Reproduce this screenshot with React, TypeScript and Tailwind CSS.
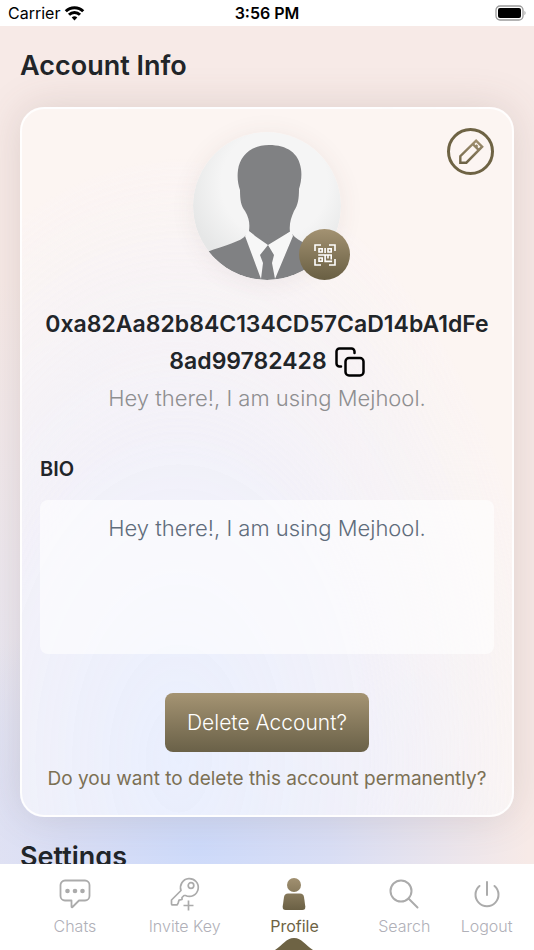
import type { ReactNode } from 'react';

export default function App() {
  return (
    <div className="h-screen w-full flex flex-col overflow-hidden bg-white font-['Inter',sans-serif] text-[#212529]">
      <StatusBar />
      <main
        className="flex-1 min-h-0 overflow-hidden px-5 pt-5 bg-[radial-gradient(ellipse_62%_30%_at_37%_98%,#cddafa_0%,#d9def5_40%,transparent_100%),radial-gradient(ellipse_50%_55%_at_0%_85%,#e8e7f3_0%,transparent_100%)] bg-[#f7eae7]"
      >
        <h1 className="text-[27px] leading-10 font-semibold">Account Info</h1>
        <AccountCard />
        <h1 className="mt-5 text-[27px] leading-10 font-semibold">Settings</h1>
      </main>
      <BottomNav />
    </div>
  )
}

function StatusBar() {
  return (
    <header className="relative z-10 h-[26px] shrink-0 grid grid-cols-3 items-center bg-white px-2 text-base text-black">
      <div className="flex items-center gap-1">
        <span>Carrier</span>
        <svg width="21" height="16" viewBox="0 0 21 16" fill="none" stroke="#000" strokeWidth="3">
          <path d="M1.8 6.3a12.3 12.3 0 0 1 17.4 0" />
          <path d="M5 9.8a7.8 7.8 0 0 1 11 0" />
          <path d="M10.500 15.500 7.700 12.600a4 4 0 0 1 5.600 0z" fill="#000" stroke="none" />
        </svg>
      </div>
      <div className="text-center font-semibold">3:56 PM</div>
      <svg className="justify-self-end" width="31" height="16" viewBox="0 0 31 16">
        <rect x="1" y="1" width="27" height="14" rx="4" fill="none" stroke="#9b9b9b" strokeWidth="1.300" />
        <rect x="3" y="3" width="23" height="10" rx="2" fill="#000" />
        <path d="M29.500 5.800q2 2.200 0 4.500z" fill="#9b9b9b" />
      </svg>
    </header>
  )
}

function AccountCard() {
  return (
    <section className="relative mt-[21px] rounded-3xl border-2 border-white/90 px-[18px] pt-[23px] pb-5 flex flex-col items-center text-center bg-[radial-gradient(ellipse_75%_85%_at_32%_92%,rgba(232,238,254,0.95)_0%,rgba(240,240,250,0.85)_50%,transparent_100%)] bg-[#fdf8f5]/80 shadow-[0_0_40px_rgba(100,80,70,0.17)]">
      <button
        aria-label="Edit profile"
        className="absolute top-[19px] right-[18px] size-[47px] rounded-full border-[3px] border-[#6e6344] flex items-center justify-center"
      >
        <PencilIcon />
      </button>

      <div className="relative size-[148px]">
        <Avatar />
        <button
          aria-label="Show QR code"
          className="absolute -right-[9px] bottom-0 size-[51px] rounded-full flex items-center justify-center bg-linear-to-b from-[#a39272] to-[#695f43]"
        >
          <QrIcon />
        </button>
      </div>

      <h2 className="mt-[26px] text-[23px] leading-[37px] font-semibold">
        0xa82Aa82b84C134CD57CaD14bA1dFe
        <span className="flex items-center justify-center gap-2">
          8ad99782428
          <button aria-label="Copy address"><CopyIcon /></button>
        </span>
      </h2>
      <p className="text-[22px] leading-9 font-light text-[#8e8e90]">Hey there!, I am using Mejhool.</p>

      <label htmlFor="bio" className="mt-[37px] self-start text-xl leading-8 font-semibold">BIO</label>
      <textarea
        id="bio"
        readOnly
        className="mt-[15px] h-[154px] w-full shrink-0 resize-none rounded-lg bg-white/60 py-3 text-center text-[22px] leading-8 font-light text-[#5f6c7b] outline-none"
        defaultValue="Hey there!, I am using Mejhool."
      />

      <button className="mt-[39px] h-[59px] rounded-lg px-[22px] text-[21px] font-light text-white bg-linear-to-b from-[#a59473] to-[#6a6148]">
        Delete Account?
      </button>
      <p className="mt-[11px] text-[19px] leading-8 text-[#7c7054] whitespace-nowrap">
        Do you want to delete this account permanently?
      </p>
    </section>
  )
}

function Avatar() {
  return (
    <svg className="size-full rounded-full shadow-[0_2px_24px_rgba(90,60,60,0.08)]" viewBox="0 0 148 148">
      <defs>
        <clipPath id="avatar-clip"><circle cx="74" cy="74" r="74" /></clipPath>
        <radialGradient id="avatar-bg" cx="0.55" cy="0.35" r="0.6">
          <stop offset="0.6" stopColor="#f5f5f5" />
          <stop offset="1" stopColor="#e6e7e7" />
        </radialGradient>
      </defs>
      <g clipPath="url(#avatar-clip)">
        <rect width="148" height="148" fill="url(#avatar-bg)" />
        <path
          d="M76 13c-17 0-29 10-31 25-1 8 0 14 2 20 0 10 1 16 5 21 4 7 5 12 4 20l19 15 22-14c-1-8 1-14 4-21 4-6 5-12 5-22 2-6 3-13 2-20-2-16-14-24-32-24z"
          fill="#808183"
        />
        <path d="M53 103C48 110 32 113 14 120L0 150h150l-14-31c-18-6-30-8-37-17z" fill="#808183" />
        <path d="m55 99 20 14-8 10 3 8-2 16L52 104z" fill="#f7f7f7" />
        <path d="m98 99-23 14 6 10-2 8 3 16 18-43z" fill="#f7f7f7" />
      </g>
    </svg>
  )
}

function PencilIcon() {
  return (
    <svg width="26" height="26" viewBox="0 0 28 28" fill="none" stroke="url(#pencil)" strokeWidth="2.600">
      <defs>
        <linearGradient id="pencil" x1="0" y1="0" x2="0" y2="28" gradientUnits="userSpaceOnUse">
          <stop stopColor="#a39272" />
          <stop offset="1" stopColor="#695f43" />
        </linearGradient>
      </defs>
      <path d="M2.500 25.500V18.500L19.500 1.800l6.500 6.500L9 25.500z" />
      <path d="m16 5.500 6.500 6.500M19 8.500l2-2" />
    </svg>
  )
}

function QrIcon() {
  return (
    <svg width="22" height="22" viewBox="0 0 22 22" fill="none" stroke="#fff" strokeWidth="1.600">
      <path d="M1 7V1h6M15 1h6v6M21 15v6h-6M7 21H1v-6" />
      <path d="M5 4.800h3.200V8H5zM14 4.800h3.200V8H14zM5 14h3.200v3.200H5zM11.100 4v5M4.200 11h13V15.500M11.100 11v6.400h7M14 11v3.500" />
    </svg>
  )
}

function CopyIcon() {
  return (
    <svg className="block" width="30" height="30" viewBox="0 0 30 30" fill="none" stroke="#000" strokeWidth="2.500" strokeLinecap="round" strokeLinejoin="round">
      <rect x="10.500" y="11" width="18" height="17.500" rx="3.500" />
      <path d="M6 19.500H4.500a3 3 0 0 1-3-3V4.500a3 3 0 0 1 3-3h12a3 3 0 0 1 3 3V6" />
    </svg>
  )
}

function BottomNav() {
  return (
    <nav className="relative h-[86px] shrink-0 flex bg-white px-5 pt-3 text-base">
      <NavItem label="Chats" className="flex-2"><ChatsIcon /></NavItem>
      <NavItem label="Invite Key" className="flex-2"><KeyIcon /></NavItem>
      <NavItem label="Profile" className="flex-2" active><ProfileIcon /></NavItem>
      <NavItem label="Search" className="flex-2"><SearchIcon /></NavItem>
      <NavItem label="Logout" className="flex-1"><LogoutIcon /></NavItem>
    </nav>
  )
}

function NavItem({ label, className, active, children }: { label: string, className: string, active?: boolean, children: ReactNode }) {
  return (
    <a
      href="#"
      className={`relative min-w-0 flex flex-col items-center gap-[2px] whitespace-nowrap ${active ? 'text-[#6e6344]' : 'font-light text-[#b0b0b8]'} ${className}`}
    >
      <span className="h-9 flex items-center">{children}</span>
      <span className="leading-6">{label}</span>
      {active ?
        <svg className="absolute bottom-0 left-1/2 -translate-x-1/2" width="38" height="12" viewBox="0 0 38 12" fill="#6e6344">
          <path d="M0 12C8 7 11 0 19 0s11 7 19 12z" />
        </svg>
        :
        <></>
      }
    </a>
  )
}

function ChatsIcon() {
  return (
    <svg width="32" height="30" viewBox="0 0 32 30" fill="none" stroke="#ababab" strokeWidth="1.800" strokeLinejoin="round">
      <path d="M6 1.500h20a4.500 4.500 0 0 1 4.500 4.500v11A4.500 4.500 0 0 1 26 21.500h-6L13.500 28Q12.500 28.800 12.500 27.500V21.500H6a4.500 4.500 0 0 1-4.500-4.500V6A4.500 4.500 0 0 1 6 1.500z" />
      <g fill="#ababab" stroke="none">
        <circle cx="8.500" cy="12" r="2.300" />
        <circle cx="16" cy="12" r="2.300" />
        <circle cx="23.500" cy="12" r="2.300" />
      </g>
    </svg>
  )
}

function KeyIcon() {
  return (
    <svg width="30" height="34" viewBox="0 0 30 34" fill="none" stroke="#ababab" strokeWidth="1.700" strokeLinejoin="round">
      <path d="M11 13.500A8.900 8.900 0 1 1 15.500 18.500L14 18.500 12 20.500v2l-3 .7-.8 2.600-1 2H2.500q-1 0-1-1V23z" />
      <circle cx="21" cy="8.500" r="2.800" />
      <path d="M18.500 23.500v10M13.500 28.500h10" />
    </svg>
  )
}

function ProfileIcon() {
  return (
    <svg width="24" height="34" viewBox="0 0 24 34" fill="url(#profile)">
      <defs>
        <linearGradient id="profile" x1="0" y1="0" x2="0" y2="34" gradientUnits="userSpaceOnUse">
          <stop stopColor="#a39272" />
          <stop offset="1" stopColor="#695f43" />
        </linearGradient>
      </defs>
      <circle cx="12" cy="8" r="7" />
      <path d="M6 16.500h12q3.500 0 4 3.500l1.300 9.500q.3 3.500-3 3.500H3.700q-3.300 0-3-3.500L2 20q.5-3.500 4-3.500z" />
    </svg>
  )
}

function SearchIcon() {
  return (
    <svg width="30" height="30" viewBox="0 0 30 30" fill="none" stroke="#ababab" strokeWidth="2" strokeLinecap="round">
      <circle cx="12" cy="12" r="10.500" />
      <path d="m19.500 19.500 9 9" />
    </svg>
  )
}

function LogoutIcon() {
  return (
    <svg width="26" height="28" viewBox="0 0 26 28" fill="none" stroke="#ababab" strokeWidth="2" strokeLinecap="round">
      <path d="M5.500 6a11.500 11.500 0 1 0 15 0M13 2v13" />
    </svg>
  )
}
